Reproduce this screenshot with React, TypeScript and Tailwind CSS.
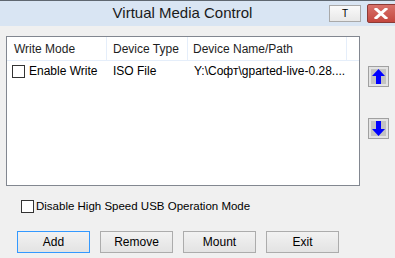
import React from "react";

const font = { fontFamily: '"Liberation Sans", Arial, sans-serif' };

function ArrowBtn({ down }: { down?: boolean }) {
  return (
    <div className="w-[21px] h-[21px] border border-[#a0a0a0] bg-[#e3e3e3] p-[2px]">
      <div className="w-full h-full bg-[#c3c3c3] flex items-center justify-center">
        <svg width="13" height="15" viewBox="0 0 13 15" className={down ? "rotate-180" : ""}>
          <path d="M6.5 0 L13 7 L9 7 L9 15 L4 15 L4 7 L0 7 Z" fill="#0000ff" />
        </svg>
      </div>
    </div>
  );
}

function Btn({ label, focused }: { label: string; focused?: boolean }) {
  return (
    <button
      className={`w-[73px] h-[22px] text-[12px] text-black bg-gradient-to-b from-[#f2f2f2] to-[#e3e3e3] border ${
        focused ? "border-[#3399ff]" : "border-[#acacac]"
      }`}
    >
      {label}
    </button>
  );
}

function Check() {
  return <span className="inline-block w-[13px] h-[13px] border border-[#333] bg-white shrink-0" />;
}

export default function App() {
  return (
    <div className="w-[395px] h-[258px] bg-[#f0f0f0] overflow-hidden text-[11px] text-black" style={font}>
      {/* Title bar */}
      <div className="relative h-[26px] bg-[#d9e5f3] border-t border-[#5f6770] flex items-center">
        <div className="flex-1 text-center text-[15px] text-[#1a1a1a] pl-[0px] pr-[30px]">Virtual Media Control</div>
        <div className="absolute left-[329px] top-[4px] w-[32px] h-[17px] border border-[#a9a9a9] bg-gradient-to-b from-[#fafafa] to-[#e8e8e8] flex items-center justify-center text-[10px]">
          T
        </div>
        <div className="absolute left-[367px] top-[3px] w-[32px] h-[19px] rounded-[2px] border border-[#8c3a36] bg-gradient-to-b from-[#d8716a] to-[#c4473f] flex items-center justify-center">
          <svg width="14" height="11" viewBox="0 0 14 11" className="-ml-[4px]">
            <path d="M2 1 L12 10 M12 1 L2 10" stroke="#fff" strokeWidth="3" strokeLinecap="square" />
          </svg>
        </div>
      </div>

      {/* Body */}
      <div className="flex pt-[10px] pl-[6px]">
        <div className="w-[354px] h-[150px] bg-white border border-[#828790]">
          <div className="flex h-[24px] border-b border-[#e5eefa] text-[#1e1e1e] text-[12px]">
            <div className="w-[100px] border-r border-[#e5eefa] pl-[7px] flex items-center">Write Mode</div>
            <div className="w-[81px] border-r border-[#e5eefa] pl-[6px] flex items-center">Device Type</div>
            <div className="w-[159px] border-r border-[#e5eefa] pl-[5px] flex items-center">Device Name/Path</div>
          </div>
          <div className="flex h-[20px] items-center text-[12px]">
            <div className="w-[101px] pl-[5px] flex items-center gap-[4px]">
              <Check />
              <span>Enable Write</span>
            </div>
            <div className="w-[81px] pl-[5px]">ISO File</div>
            <div className="pl-[5px] whitespace-nowrap">Y:\Софт\gparted-live-0.28....</div>
          </div>
        </div>
        <div className="ml-[8px] pt-[30px] flex flex-col gap-[31px]">
          <ArrowBtn />
          <ArrowBtn down />
        </div>
      </div>

      <div className="flex items-center gap-[2px] pl-[21px] mt-[12px] text-[11.5px]">
        <Check />
        <span>Disable High Speed USB Operation Mode</span>
      </div>

      <div className="flex gap-[10px] pl-[17px] mt-[16px]">
        <Btn label="Add" focused />
        <Btn label="Remove" />
        <Btn label="Mount" />
        <Btn label="Exit" />
      </div>
    </div>
  );
}
